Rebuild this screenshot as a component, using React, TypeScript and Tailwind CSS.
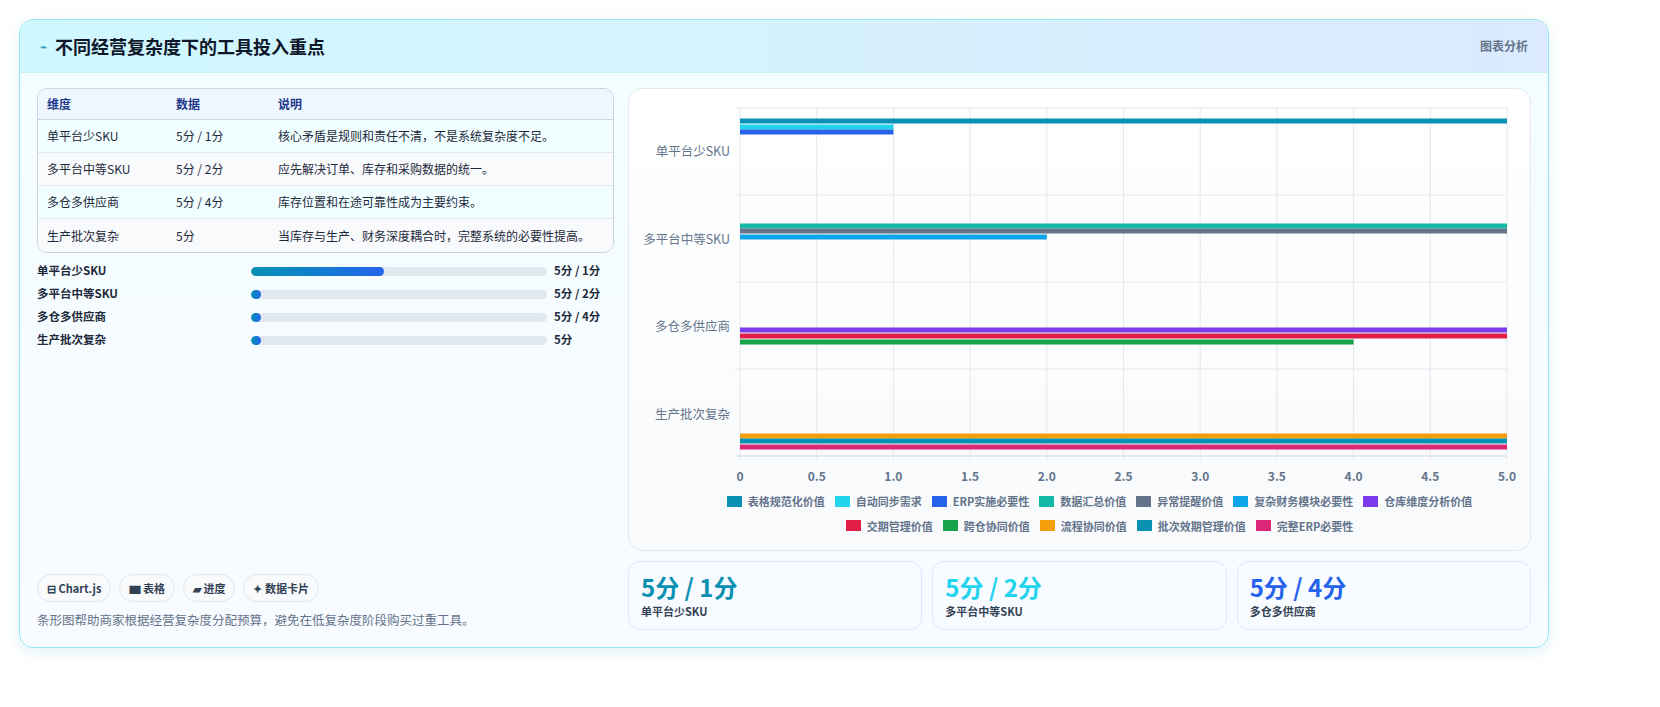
const F = { fontFamily: '"Noto Sans CJK SC", "Noto Sans", sans-serif' };

const rows = [
  ['单平台少SKU', '5分 / 1分', '核心矛盾是规则和责任不清，不是系统复杂度不足。'],
  ['多平台中等SKU', '5分 / 2分', '应先解决订单、库存和采购数据的统一。'],
  ['多仓多供应商', '5分 / 4分', '库存位置和在途可靠性成为主要约束。'],
  ['生产批次复杂', '5分', '当库存与生产、财务深度耦合时，完整系统的必要性提高。'],
];

const bars: [number, number, string][] = [
  [121, 5, '#0891b2'], [127, 1, '#22d3ee'], [132, 1, '#2563eb'],
  [226, 5, '#14b8a6'], [231, 5, '#64748b'], [237, 2, '#0ea5e9'],
  [330, 5, '#7c3aed'], [336, 5, '#e11d48'], [342, 4, '#16a34a'],
  [436, 5, '#f59e0b'], [441, 5, '#0891b2'], [447, 5, '#db2777'],
];
const legend1: [string, string][] = [
  ['#0891b2', '表格规范化价值'], ['#22d3ee', '自动同步需求'], ['#2563eb', 'ERP实施必要性'], ['#14b8a6', '数据汇总价值'],
  ['#64748b', '异常提醒价值'], ['#0ea5e9', '复杂财务模块必要性'], ['#7c3aed', '仓库维度分析价值'],
];
const legend2: [string, string][] = [
  ['#e11d48', '交期管理价值'], ['#16a34a', '跨仓协同价值'], ['#f59e0b', '流程协同价值'], ['#0891b2', '批次效期管理价值'], ['#db2777', '完整ERP必要性'],
];

function Chart() {
  const ox = 740 - 629, oy = -89, u = 153.4;
  const cats = ['单平台少SKU', '多平台中等SKU', '多仓多供应商', '生产批次复杂'];
  const ticks = ['0', '0.5', '1.0', '1.5', '2.0', '2.5', '3.0', '3.5', '4.0', '4.5', '5.0'];
  return (
    <svg width="900" height="400" className="block">
      {ticks.map((t, i) => (
        <g key={t}>
          <line x1={ox + i * u / 2} x2={ox + i * u / 2} y1={108 + oy} y2={460 + oy} stroke="#e5e7eb" />
          <text x={ox + i * u / 2} y={481 + oy} textAnchor="middle" fontSize="12" fill="#64748b" fontWeight="600" style={F}>{t}</text>
        </g>
      ))}
      {[0, 1, 2, 3, 4].map(i => (
        <line key={i} x1={ox - 5} x2={ox + 5 * u} y1={108 + oy + i * 87} y2={108 + oy + i * 87} stroke={i === 4 ? '#cbd5e1' : '#e5e7eb'} />
      ))}
      {cats.map((c, i) => (
        <text key={c} x={ox - 10} y={156 + oy + i * 87.5} textAnchor="end" fontSize="12.5" fill="#64748b" style={F}>{c}</text>
      ))}
      {bars.map(([y, v, col], i) => (
        <rect key={i} x={ox} y={y + oy - 2.5} width={v * u} height="5" fill={col} />
      ))}
    </svg>
  );
}

function Leg({ items }: { items: [string, string][] }) {
  return (
    <div className="flex justify-center gap-[10px] text-[11px] font-semibold text-[#64748b]">
      {items.map(([c, t]) => (
        <div key={t} className="flex items-center gap-[6px]">
          <span className="w-[15px] h-[11px]" style={{ background: c }} />
          {t}
        </div>
      ))}
    </div>
  );
}

export default function App() {
  return (
    <div className="w-[1660px] h-[707px] bg-white pt-[19px] pl-[19px]" style={F}>
      <div className="w-[1530px] h-[629px] rounded-[14px] border border-[#99e6ef] overflow-hidden flex flex-col bg-gradient-to-b from-[#f3fdff] to-[#f8fbff] shadow-[0_4px_14px_rgba(8,145,178,0.12)]">
        <div className="h-[53px] flex items-center justify-between px-[20px] bg-gradient-to-r from-[#cff8fe] to-[#dbeafe] border-b border-[#cdeff6]">
          <div className="flex items-center gap-[8px]">
            <span className="text-[#0891b2] text-[12px]">⌁</span>
            <span className="text-[18px] font-bold text-[#0f172a]">不同经营复杂度下的工具投入重点</span>
          </div>
          <span className="text-[12px] font-semibold text-[#64748b]">图表分析</span>
        </div>
        <div className="flex flex-1 px-[17px] pt-[15px] pb-[17px] gap-[14px]">
          <div className="w-[577px] flex flex-col">
            <div className="rounded-[10px] border border-[#cbd5e1] overflow-hidden text-[12px] text-[#1e293b]">
              <div className="flex h-[31px] items-center bg-[#eef6ff] border-b border-[#cbd5e1] font-semibold text-[#1e3a8a]">
                <div className="w-[138px] pl-[9px]">维度</div><div className="w-[102px]">数据</div><div>说明</div>
              </div>
              {rows.map((r, i) => (
                <div key={i} className={`flex h-[33px] items-center ${i % 2 ? 'bg-[#f8fafc]' : 'bg-[#f0feff]'} ${i < 3 ? 'border-b border-[#e2e8f0]' : ''}`}>
                  <div className="w-[138px] pl-[9px]">{r[0]}</div><div className="w-[102px]">{r[1]}</div><div>{r[2]}</div>
                </div>
              ))}
            </div>
            <div className="mt-[10px] flex flex-col gap-[7px] text-[11.5px] font-semibold text-[#1e293b]">
              {rows.map((r, i) => (
                <div key={i} className="flex items-center h-[16px]">
                  <div className="w-[214px]">{r[0]}</div>
                  <div className="w-[296px] h-[9px] rounded-full bg-[#e2e8f0] overflow-hidden">
                    <div className={`h-full rounded-full bg-gradient-to-r from-[#0891b2] to-[#2563eb] ${i === 0 ? 'w-[133px]' : 'w-[10px]'}`} />
                  </div>
                  <div className="ml-[7px]">{r[1]}</div>
                </div>
              ))}
            </div>
            <div className="flex-1" />
            <div className="flex gap-[8px] text-[11px] font-semibold text-[#334155]">
              {['⊟ Chart.js', '▆ 表格', '▰ 进度', '✦ 数据卡片'].map(t => (
                <span key={t} className="h-[28px] px-[9px] flex items-center rounded-full border border-[#e2e8f0] bg-[#f8fafc]">{t}</span>
              ))}
            </div>
            <div className="mt-[9px] text-[12.5px] text-[#64748b]">条形图帮助商家根据经营复杂度分配预算，避免在低复杂度阶段购买过重工具。</div>
          </div>
          <div className="flex-1 flex flex-col gap-[10px]">
            <div className="h-[463px] rounded-[14px] border border-[#e2e8f0] bg-gradient-to-b from-white to-[#f8fafc] flex flex-col">
              <Chart />
              <div className="flex flex-col gap-[8px] mt-[4px] pl-[40px]">
                <Leg items={legend1} />
                <Leg items={legend2} />
              </div>
            </div>
            <div className="flex gap-[10px] flex-1">
              {[['5分 / 1分', '单平台少SKU', 'text-[#0891b2]'], ['5分 / 2分', '多平台中等SKU', 'text-[#22d3ee]'], ['5分 / 4分', '多仓多供应商', 'text-[#2563eb]']].map(([v, l, c]) => (
                <div key={l} className="flex-1 rounded-[12px] border border-[#dbeafe] bg-[#f8fbff] px-[12px] pt-[9px]">
                  <div className={`text-[24px] font-bold leading-[32px] ${c}`}>{v}</div>
                  <div className="text-[11px] font-semibold text-[#334155]">{l}</div>
                </div>
              ))}
            </div>
          </div>
        </div>
      </div>
    </div>
  );
}
